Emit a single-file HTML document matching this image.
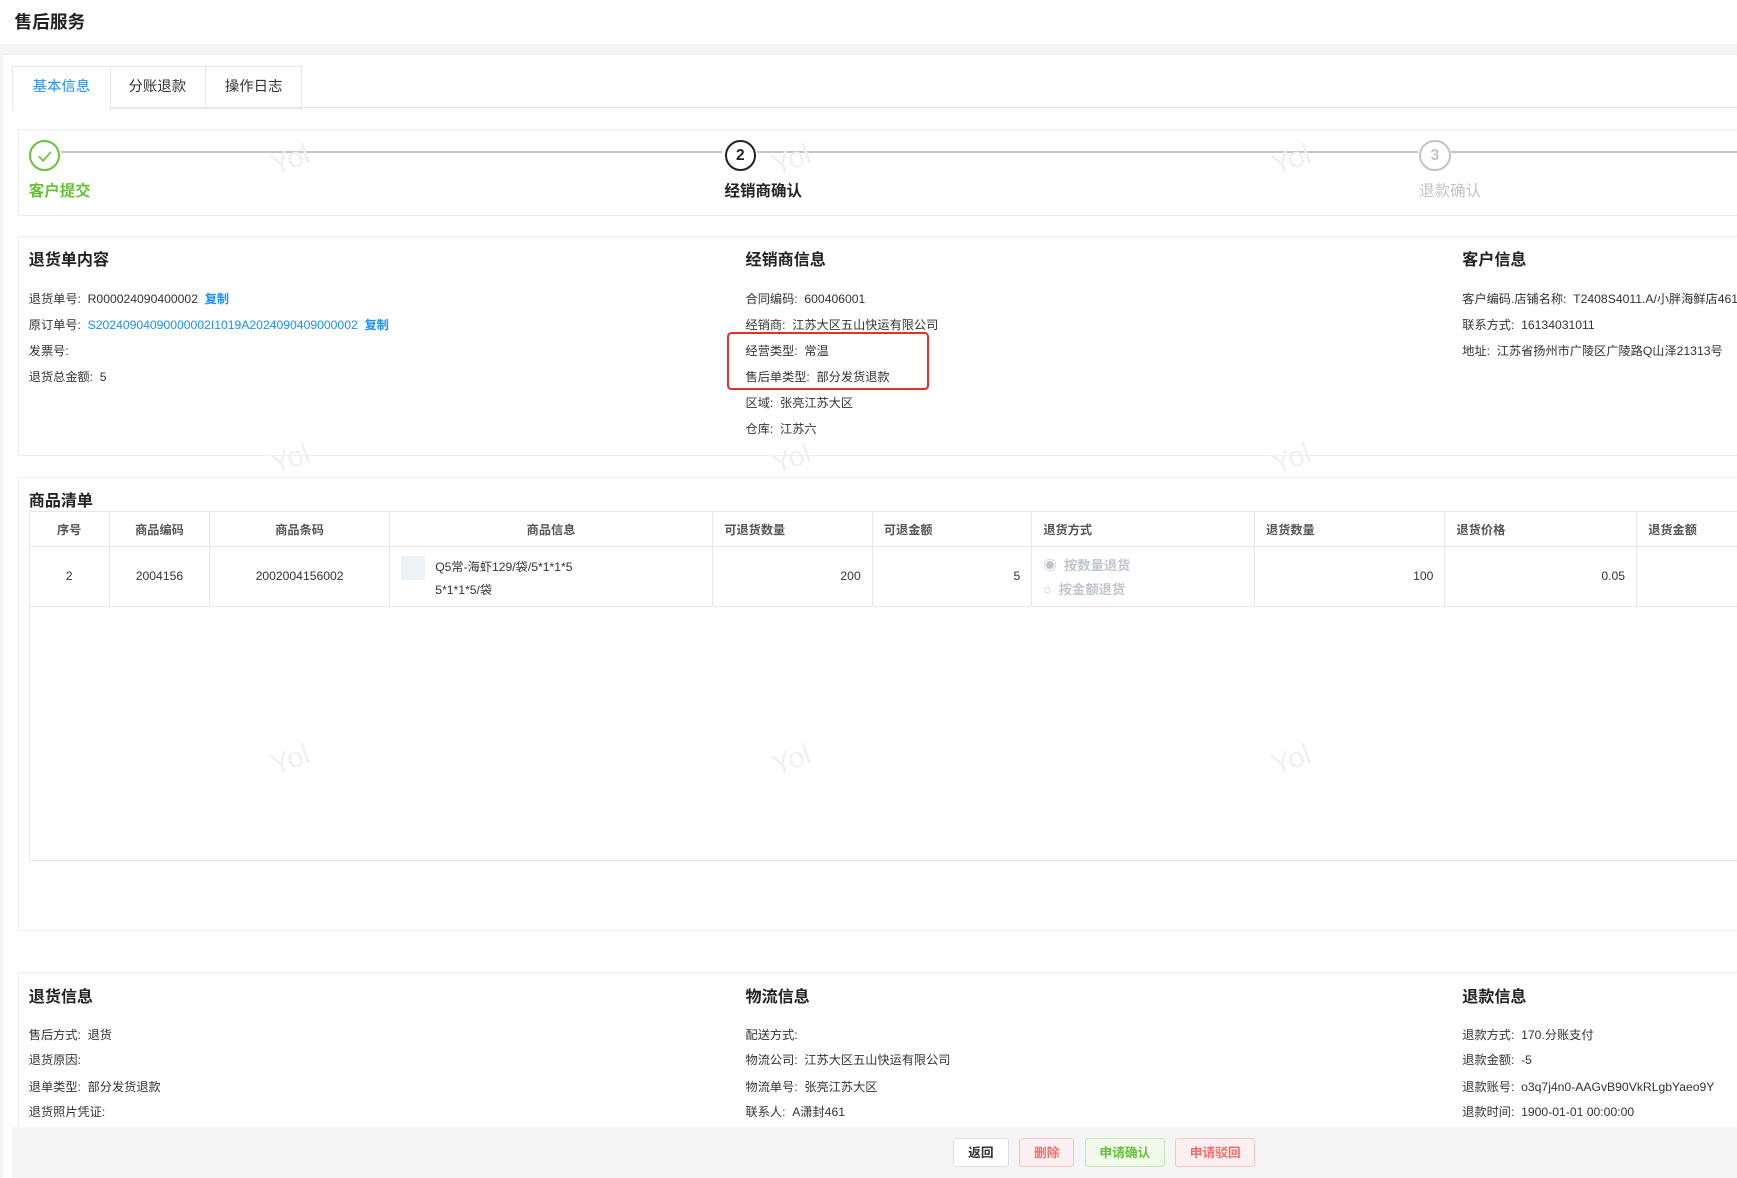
<!DOCTYPE html>
<html><head><meta charset="utf-8">
<style>
html{zoom:1.1078}
body{margin:0;width:1568px;height:1063px;overflow:hidden;background:#fff;font-family:"Liberation Sans","Noto Sans CJK SC",sans-serif;color:#333;position:relative}
.a{position:absolute;white-space:nowrap}
.f12{font-size:11px;color:#333}
.h{font-size:14.5px;font-weight:bold;color:#222}
.card{position:absolute;left:16px;right:-10px;border:1px solid #ebeef5;border-right:none;background:#fff}
.blue{color:#1890ff}
.wm{position:absolute;color:#f0f0f0;font-size:26px;transform:rotate(-20deg);font-family:"Liberation Sans",sans-serif}
table{border-collapse:collapse;position:absolute;left:26px;top:461px;font-size:11px;table-layout:fixed;width:1600px}
td,th{border:1px solid #e4e7ed;padding:0 10px;font-weight:bold;color:#555;overflow:hidden}
th{height:31px;text-align:left}
td{height:53px;font-weight:normal;color:#333}
.btn{position:absolute;top:1027px;height:25px;line-height:25px;border:1px solid #dcdfe6;border-radius:3px;font-size:11.5px;text-align:center;font-weight:bold}
</style></head><body>
<div class="a" style="left:13px;top:7px;font-size:16px;font-weight:bold;color:#222">售后服务</div>
<div class="a" style="left:0;top:40px;width:1568px;height:1023px;background:#f5f5f7"></div>
<div class="a" style="left:3px;top:50px;width:1570px;height:1013px;background:#fff;box-shadow:0 0 4px rgba(0,0,0,.06)"></div>
<div class="a" style="left:11px;top:97px;width:1560px;border-top:1px solid #e4e7ed"></div>
<div class="a" style="left:11px;top:60px;width:87px;height:38px;border:1px solid #e4e7ed;border-bottom:1px solid #fff;background:#fff;text-align:center;line-height:37px;font-size:13px;color:#1890ff">基本信息</div>
<div class="a" style="left:99px;top:60px;width:86px;height:37px;border:1px solid #e4e7ed;border-left:none;text-align:center;line-height:37px;font-size:13px;color:#333">分账退款</div>
<div class="a" style="left:186px;top:60px;width:86px;height:37px;border:1px solid #e4e7ed;border-left:none;text-align:center;line-height:37px;font-size:13px;color:#333">操作日志</div>
<div class="card" style="top:116px;height:77px"></div>
<div class="a" style="left:55px;top:136px;width:597px;height:2px;background:#c0c4cc"></div>
<div class="a" style="left:683px;top:136px;width:597px;height:2px;background:#c0c4cc"></div>
<div class="a" style="left:1310px;top:136px;width:270px;height:2px;background:#c0c4cc"></div>
<div class="a" style="left:26px;top:126px;width:25px;height:25px;border:2px solid #67c23a;border-radius:50%"><svg width="25" height="25"><path d="M7 13 L11 17 L18 9" stroke="#67c23a" stroke-width="1.5" fill="none"/></svg></div>
<div class="a" style="left:26px;top:162px;font-size:14px;color:#67c23a;font-weight:bold">客户提交</div>
<div class="a" style="left:654px;top:126px;width:25px;height:25px;border:2px solid #222;border-radius:50%;text-align:center;line-height:25px;font-weight:bold;font-size:14px;color:#222">2</div>
<div class="a" style="left:654px;top:162px;font-size:14px;color:#222;font-weight:bold">经销商确认</div>
<div class="a" style="left:1281px;top:126px;width:25px;height:25px;border:2px solid #c0c4cc;border-radius:50%;text-align:center;line-height:25px;font-weight:bold;font-size:14px;color:#c0c4cc">3</div>
<div class="a" style="left:1281px;top:162px;font-size:14px;color:#c0c4cc">退款确认</div>
<div class="card" style="top:213px;height:197px"></div>
<div class="a h" style="left:26px;top:222px">退货单内容</div>
<div class="a h" style="left:673px;top:222px">经销商信息</div>
<div class="a h" style="left:1320px;top:222px">客户信息</div>
<div class="a f12" style="left:26px;top:261px">退货单号:&nbsp; R000024090400002 &nbsp;<b class="blue">复制</b></div>
<div class="a f12" style="left:26px;top:284px">原订单号:&nbsp; <span class="blue">S20240904090000002I1019A2024090409000002</span> &nbsp;<b class="blue">复制</b></div>
<div class="a f12" style="left:26px;top:308px">发票号:</div>
<div class="a f12" style="left:26px;top:331px">退货总金额:&nbsp; 5</div>
<div class="a f12" style="left:673px;top:261px">合同编码:&nbsp; 600406001</div>
<div class="a f12" style="left:673px;top:284px">经销商:&nbsp; 江苏大区五山快运有限公司</div>
<div class="a f12" style="left:673px;top:308px">经营类型:&nbsp; 常温</div>
<div class="a f12" style="left:673px;top:331px">售后单类型:&nbsp; 部分发货退款</div>
<div class="a f12" style="left:673px;top:355px">区域:&nbsp; 张亮江苏大区</div>
<div class="a f12" style="left:673px;top:378px">仓库:&nbsp; 江苏六</div>
<div class="a" style="left:656px;top:300px;width:179px;height:48px;border:2px solid #e8302a;border-radius:4px"></div>
<div class="a f12" style="left:1320px;top:261px">客户编码.店铺名称:&nbsp; T2408S4011.A/小胖海鲜店461</div>
<div class="a f12" style="left:1320px;top:284px">联系方式:&nbsp; 16134031011</div>
<div class="a f12" style="left:1320px;top:308px">地址:&nbsp; 江苏省扬州市广陵区广陵路Q山泽21313号</div>
<div class="card" style="top:431px;height:408px"></div>
<div class="a h" style="left:26px;top:440px">商品清单</div>
<div class="a" style="left:26px;top:461px;width:1560px;height:314px;border:1px solid #e4e7ed;border-right:none"></div>
<table>
<colgroup><col style="width:72px"><col style="width:91px"><col style="width:162px"><col style="width:292px"><col style="width:144px"><col style="width:144px"><col style="width:201px"><col style="width:172px"><col style="width:173px"><col style="width:149px"></colgroup>
<tr><th style="text-align:center">序号</th><th style="text-align:center">商品编码</th><th style="text-align:center">商品条码</th><th style="text-align:center">商品信息</th><th>可退货数量</th><th>可退金额</th><th>退货方式</th><th>退货数量</th><th>退货价格</th><th>退货金额</th></tr>
<tr><td style="text-align:center">2</td><td style="text-align:center">2004156</td><td style="text-align:center">2002004156002</td>
<td><div style="position:relative;height:53px"><div class="a" style="left:0;top:8px;width:22px;height:22px;background:#eef1f5"></div><div class="a" style="left:31px;top:9px">Q5常-海虾129/袋/5*1*1*5</div><div class="a" style="left:31px;top:30px">5*1*1*5/袋</div></div></td>
<td style="text-align:right">200</td><td style="text-align:right">5</td>
<td style="color:#c0c4cc;font-size:12px;font-weight:bold"><div>◉&nbsp; 按数量退货</div><div style="margin-top:4px">○&nbsp; 按金额退货</div></td>
<td style="text-align:right">100</td><td style="text-align:right">0.05</td><td></td></tr>
</table>
<div class="card" style="top:877px;height:140px"></div>
<div class="a h" style="left:26px;top:887px">退货信息</div>
<div class="a h" style="left:673px;top:887px">物流信息</div>
<div class="a h" style="left:1320px;top:887px">退款信息</div>
<div class="a f12" style="left:26px;top:925px">售后方式:&nbsp; 退货</div>
<div class="a f12" style="left:26px;top:948px">退货原因:</div>
<div class="a f12" style="left:26px;top:972px">退单类型:&nbsp; 部分发货退款</div>
<div class="a f12" style="left:26px;top:995px">退货照片凭证:</div>
<div class="a f12" style="left:673px;top:925px">配送方式:</div>
<div class="a f12" style="left:673px;top:948px">物流公司:&nbsp; 江苏大区五山快运有限公司</div>
<div class="a f12" style="left:673px;top:972px">物流单号:&nbsp; 张亮江苏大区</div>
<div class="a f12" style="left:673px;top:995px">联系人:&nbsp; A潇封461</div>
<div class="a f12" style="left:1320px;top:925px">退款方式:&nbsp; 170.分账支付</div>
<div class="a f12" style="left:1320px;top:948px">退款金额:&nbsp; -5</div>
<div class="a f12" style="left:1320px;top:972px">退款账号:&nbsp; o3q7j4n0-AAGvB90VkRLgbYaeo9Y</div>
<div class="a f12" style="left:1320px;top:995px">退款时间:&nbsp; 1900-01-01 00:00:00</div>
<div class="a" style="left:11px;top:1017px;width:1560px;height:46px;background:#f5f5f5"></div>
<div class="btn" style="left:860px;width:49px;background:#fff;color:#333">返回</div>
<div class="btn" style="left:920px;width:48px;background:#fef0f0;border-color:#fbc4c4;color:#f56c6c">删除</div>
<div class="btn" style="left:979px;width:71px;background:#f0f9eb;border-color:#c2e7b0;color:#67c23a">申请确认</div>
<div class="btn" style="left:1061px;width:70px;background:#fef0f0;border-color:#fbc4c4;color:#f56c6c">申请驳回</div>
<div class="wm" style="left:245px;top:130px">Yol</div><div class="wm" style="left:697px;top:130px">Yol</div><div class="wm" style="left:1148px;top:130px">Yol</div>
<div class="wm" style="left:245px;top:400px">Yol</div><div class="wm" style="left:697px;top:400px">Yol</div><div class="wm" style="left:1148px;top:400px">Yol</div>
<div class="wm" style="left:245px;top:672px">Yol</div><div class="wm" style="left:697px;top:672px">Yol</div><div class="wm" style="left:1148px;top:672px">Yol</div>
</body></html>
